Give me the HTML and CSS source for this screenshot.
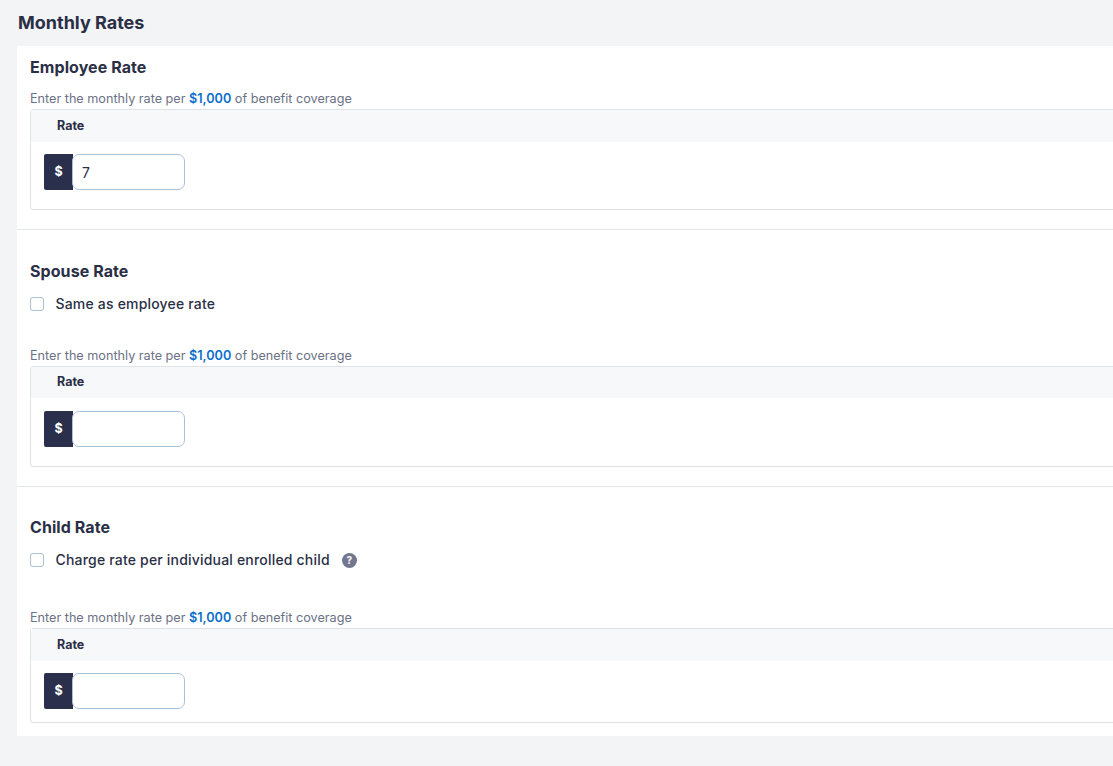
FILE: index.html
```html
<!DOCTYPE html>
<html lang="en">
<head>
<meta charset="utf-8">
<title>Monthly Rates</title>
<link rel="stylesheet" href="styles.css">
</head>
<body>
<main class="page">
  <h1 class="page-title">Monthly Rates</h1>
  <div class="card">
    <section class="section section-employee">
      <h2 class="section-title">Employee Rate</h2>
      <p class="hint">Enter the monthly rate per <strong>$1,000</strong> of benefit coverage</p>
      <div class="rate-table">
        <div class="rate-head">Rate</div>
        <div class="rate-body">
          <span class="addon">$</span>
          <input class="rate-input" type="text" value="7" aria-label="Employee rate">
        </div>
      </div>
    </section>
    <section class="section section-spouse">
      <h2 class="section-title">Spouse Rate</h2>
      <label class="check-row"><input class="check" type="checkbox"><span>Same as employee rate</span></label>
      <p class="hint">Enter the monthly rate per <strong>$1,000</strong> of benefit coverage</p>
      <div class="rate-table">
        <div class="rate-head">Rate</div>
        <div class="rate-body">
          <span class="addon">$</span>
          <input class="rate-input" type="text" aria-label="Spouse rate">
        </div>
      </div>
    </section>
    <section class="section section-child">
      <h2 class="section-title">Child Rate</h2>
      <label class="check-row"><input class="check" type="checkbox"><span>Charge rate per individual enrolled child</span><span class="help">?</span></label>
      <p class="hint">Enter the monthly rate per <strong>$1,000</strong> of benefit coverage</p>
      <div class="rate-table rate-table-short">
        <div class="rate-head">Rate</div>
        <div class="rate-body">
          <span class="addon">$</span>
          <input class="rate-input" type="text" aria-label="Child rate">
        </div>
      </div>
    </section>
  </div>
</main>
</body>
</html>
```
FILE: styles.css
```css
* { box-sizing: border-box; }
html, body { margin: 0; height: 100%; overflow: hidden; }
body {
  background: #f3f4f6;
  color: #2a2f45;
  font-family: Inter, "Liberation Sans", sans-serif;
}
.page { padding: 12px 0 0 17px; width: 1140px; }
.page-title {
  margin: 0 0 12px 1px;
  font-size: 18px;
  line-height: 22px;
  font-weight: 700;
}
.card { background: #fff; height: 690px; }
.section { padding: 11px 0 0 13px; border-bottom: 1px solid #e2e5ea; }
.section-employee { height: 184px; }
.section-spouse { height: 257px; padding-top: 31px; }
.section-child { border-bottom: 0; padding-top: 30px; }
.section-title {
  margin: 0;
  font-size: 16px;
  line-height: 20px;
  font-weight: 700;
  letter-spacing: 0.08px;
}
.hint {
  margin: 14px 0 0;
  font-size: 12.65px;
  line-height: 16px;
  color: #6b7186;
}
.hint strong { color: #0b6fcc; font-weight: 600; }
.check-row {
  display: flex;
  align-items: center;
  margin-top: 12px;
  height: 20px;
  font-size: 14px;
  font-weight: 500;
  letter-spacing: 0.19px;
}
.check-row + .hint { margin-top: 35px; }
.section-child .check-row + .hint { margin-top: 41px; }
.check {
  appearance: none;
  width: 14px;
  height: 14px;
  margin: 2px 11.5px 0 0;
  border: 1px solid #a9c1d6;
  border-radius: 3px;
  background: #fff;
}
.help {
  display: inline-flex;
  align-items: center;
  justify-content: center;
  width: 15px;
  height: 15px;
  margin: 2px 0 0 12px;
  border-radius: 50%;
  background: #73768f;
  color: #fff;
  font-size: 10px;
  font-weight: 700;
  letter-spacing: 0;
}
.rate-table {
  margin-top: 2px;
  height: 101px;
  border: 1px solid #dfe2e7;
  border-radius: 3px;
}
.rate-table-short { height: 95px; }
.rate-head {
  height: 32px;
  padding: 8px 0 0 26px;
  background: #f7f8fa;
  font-size: 12.5px;
  line-height: 16px;
  font-weight: 700;
}
.section-spouse .rate-head { height: 31px; padding-top: 7px; }
.rate-body { display: flex; padding: 12px 0 0 13px; }
.section-spouse .rate-body { padding-top: 13px; }
.addon {
  display: flex;
  align-items: center;
  justify-content: center;
  width: 29px;
  height: 36px;
  padding-bottom: 2px;
  background: #2a2f4b;
  border-radius: 2px 0 0 2px;
  color: #fff;
  font-size: 12.5px;
  font-weight: 700;
}
.rate-input {
  width: 113px;
  height: 36px;
  margin-left: -1px;
  padding: 0 9px;
  border: 1px solid #a9c1d6;
  border-radius: 7px;
  background: #fff;
  color: #2a2f45;
  font-family: inherit;
  font-size: 14px;
  outline: none;
}
```
